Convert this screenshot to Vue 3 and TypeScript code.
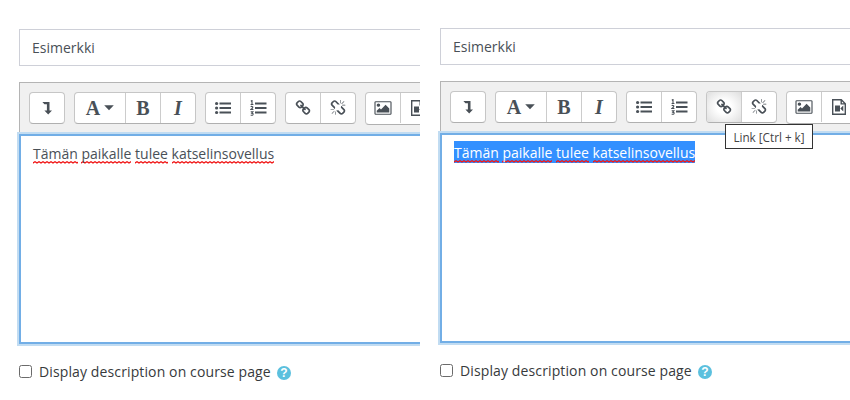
<script setup lang="ts">
interface Panel {
  id: string
  selected: boolean
}

const panels: Panel[] = [
  { id: 'before', selected: false },
  { id: 'after', selected: true },
]
const words: string[] = ['Tämän', 'paikalle', 'tulee', 'katselinsovellus']

const linkPath =
  'M1520 1216q0-40-28-68l-208-208q-28-28-68-28-42 0-72 32 3 3 19 18.5t21.5 21.5 15 19 13 25.5 3.5 27.5q0 40-28 68t-68 28q-15 0-27.5-3.5t-25.5-13-19-15-21.5-21.5-18.5-19q-33 31-33 73 0 40 28 68l206 207q27 27 68 27 40 0 68-26l147-146q28-28 28-67zm-703-705q0-40-28-68l-206-207q-28-28-68-28-39 0-68 27l-147 146q-28 28-28 67 0 40 28 68l208 208q27 27 68 27 42 0 72-31-3-3-19-18.5t-21.5-21.5-15-19-13-25.5-3.5-27.5q0-40 28-68t68-28q15 0 27.5 3.5t25.5 13 19 15 21.5 21.5 18.5 19q33-31 33-73zm895 705q0 120-85 203l-147 146q-83 83-203 83-121 0-204-85l-206-207q-83-83-83-203 0-123 88-209l-88-88q-86 88-208 88-120 0-204-84l-208-208q-84-84-84-204t85-203l147-146q83-83 203-83 121 0 204 85l206 207q83 83 83 203 0 123-88 209l88 88q86-88 208-88 120 0 204 84l208 208q84 84 84 204z'
const unlinkPath =
  'M503 1271l-256 256q-10 9-23 9-12 0-23-9-9-10-9-23t9-23l256-256q10-9 23-9t23 9q9 10 9 23t-9 23zm169 41v320q0 14-9 23t-23 9-23-9-9-23v-320q0-14 9-23t23-9 23 9 9 23zm-224-224q0 14-9 23t-23 9h-320q-14 0-23-9t-9-23 9-23 23-9h320q14 0 23 9t9 23zm1264 128q0 120-85 203l-147 146q-83 83-203 83-121 0-204-85l-334-335q-21-21-42-56l239-18 273 274q28 28 68 28t68-27l147-146q28-28 28-67 0-40-28-68l-274-275 18-239q35 21 56 42l336 336q84 86 84 204zm-617-724l-239 18-273-274q-28-28-68-28-39 0-68 27l-147 146q-28 28-28 67 0 40 28 68l274 274-18 240q-35-21-56-42l-336-336q-84-86-84-204 0-120 85-203l147-146q83-83 203-83 121 0 204 85l334 335q21 21 42 56zm633 84q0 14-9 23t-23 9h-320q-14 0-23-9t-9-23 9-23 23-9h320q14 0 23 9t9 23zm-544-544v320q0 14-9 23t-23 9-23-9-9-23v-320q0-14 9-23t23-9 23 9 9 23zm407 151l-256 256q-11 9-23 9t-23-9q-9-10-9-23t9-23l256-256q10-9 23-9t23 9q9 10 9 23t-9 23z'
const imagePath =
  'M576 576q0 80-56 136t-136 56-136-56-56-136 56-136 136-56 136 56 56 136zm1024 384v448h-1408v-192l320-320 160 160 512-512zm96-704h-1600q-13 0-22.5 9.5t-9.5 22.5v1216q0 13 9.5 22.5t22.5 9.5h1600q13 0 22.5-9.5t9.5-22.5v-1216q0-13-9.5-22.5t-22.5-9.5zm160 32v1216q0 66-47 113t-113 47h-1600q-66 0-113-47t-47-113v-1216q0-66 47-113t113-47h1600q66 0 113 47t47 113z'
</script>

<template>
  <div class="screen">
    <section v-for="p in panels" :key="p.id" class="panel" :class="p.id">
      <div class="name-field"><span>Esimerkki</span></div>

      <div class="editor">
        <div class="toolbar">
          <div class="group">
            <button class="btn" type="button">
              <svg width="16" height="16" viewBox="0 0 16 16">
                <path d="M3.400 2h7.100v8.500h2.500L9.200 14.500 5.400 10.500h2.500V4.300H5.400z" />
              </svg>
            </button>
          </div>
          <div class="group">
            <button class="btn wide" type="button">
              <span class="glyph">A</span>
              <svg class="caret" width="10" height="6" viewBox="0 0 10 6"><path d="M0.200 0.300h9.600L5 5.300z" /></svg>
            </button>
            <button class="btn" type="button"><span class="glyph bold">B</span></button>
            <button class="btn" type="button"><span class="glyph italic">I</span></button>
          </div>
          <div class="group">
            <button class="btn" type="button">
              <svg width="16" height="16" viewBox="0 0 16 16">
                <circle cx="1.600" cy="3.500" r="1.600" /><circle cx="1.600" cy="8" r="1.600" /><circle cx="1.600" cy="12.500" r="1.600" />
                <path d="M4.500 2.500H16v2H4.500zM4.500 7H16v2H4.500zM4.500 11.500H16v2H4.500z" />
              </svg>
            </button>
            <button class="btn" type="button">
              <svg width="17" height="16" viewBox="0 0 17 16">
                <path d="M5 2.500h11.500v2H5zM5 7h11.500v2H5zM5 11.500h11.500v2H5z" />
                <path class="numerals" d="M0.800 1.200L2 .5v4M.6 4.500h2.800M.7 6.800q1-.9 2 0 .6 1-1.800 2.700h2.500M.7 11.700h2.200l-1.200 1.500q2 .2 1.200 1.600-.8.900-2.200.2" />
              </svg>
            </button>
          </div>
          <div class="group">
            <button class="btn" :class="{ hovered: p.selected }" type="button">
              <svg width="16" height="16" viewBox="0 0 1792 1792"><path :d="linkPath" /></svg>
            </button>
            <button class="btn" type="button">
              <svg width="16" height="16" viewBox="0 0 1792 1792"><path :d="unlinkPath" /></svg>
            </button>
          </div>
          <div class="group media">
            <button class="btn" type="button">
              <svg width="18" height="16" viewBox="-64 0 1920 1792"><path :d="imagePath" /></svg>
            </button>
            <button class="btn" type="button">
              <svg width="14" height="16" viewBox="0 0 14 16">
                <path class="outline" d="M.7.700h8.600l4 4v10.600H.7zM9.200.7v4.200h4.100" />
                <path d="M3 6.600h5v5.800H3zM8.300 9.500l3-2.900v5.800z" />
              </svg>
            </button>
            <button class="btn" type="button"></button>
          </div>
        </div>
        <div class="content">
          <p class="line" :class="{ selected: p.selected }">
            <template v-for="(w, i) in words" :key="w"><span class="misspelt">{{ w }}</span>{{ i < words.length - 1 ? ' ' : '' }}</template>
          </p>
        </div>
        <div v-if="p.selected" class="tooltip">Link [Ctrl + k]</div>
      </div>

      <div class="option">
        <span class="checkbox"></span>
        <span class="label">Display description on course page</span>
        <span class="help">?</span>
      </div>
    </section>
  </div>
</template>

<style>
body {
  margin: 0;
  background: #fff;
}
</style>

<style scoped>
.screen {
  display: grid;
  grid-template-columns: 420px 429px;
  column-gap: 1px;
  width: 850px;
  height: 400px;
  overflow: hidden;
  font-family: "Open Sans", "Noto Sans", sans-serif;
  font-size: 14px;
  color: #495057;
}
.panel {
  box-sizing: border-box;
  height: 400px;
  padding: 29px 0 0 19px;
  overflow: hidden;
}
.after {
  padding-top: 28px;
  padding-left: 22px;
  margin-left: -3px;
}
.name-field {
  box-sizing: border-box;
  width: 460px;
  height: 37px;
  padding-left: 12px;
  border: 1px solid #ced0d8;
  line-height: 35px;
}
.editor {
  position: relative;
  width: 460px;
  margin-top: 16px;
}
.toolbar {
  box-sizing: border-box;
  display: flex;
  gap: 9px;
  height: 52px;
  padding: 9px;
  border: 1px solid #b4b4b4;
  border-bottom: 0;
  background: #f0f0f0;
}
.group {
  box-sizing: border-box;
  display: flex;
  flex: none;
  height: 32px;
  border: 1px solid #c6c6c6;
  border-bottom-color: #b0b0b0;
  border-radius: 4px;
  background: #fff;
  overflow: hidden;
}
.media {
  height: 33px;
}
.btn {
  box-sizing: border-box;
  display: flex;
  align-items: center;
  justify-content: center;
  width: 34px;
  height: 30px;
  padding: 0;
  border: 0;
  background: transparent;
  color: #495057;
}
.btn + .btn {
  width: 35px;
  border-left: 1px solid #ccc;
}
.wide {
  width: 50px;
  gap: 4px;
}
.hovered {
  background: radial-gradient(ellipse at center, #fff 30%, #dedede 100%);
}
svg {
  display: block;
  flex: none;
  fill: #495057;
}
.numerals,
.outline {
  fill: none;
  stroke: #495057;
  stroke-width: 1.1;
}
.outline {
  stroke-width: 1.4;
}
.glyph {
  font: bold 20px/30px "Liberation Serif", serif;
}
.italic {
  font-style: italic;
}
.content {
  box-sizing: border-box;
  height: 210px;
  padding: 6px 12px;
  border: 2px solid #72aee6;
  background: #fff;
  box-shadow: 0 0 0 2px #c1dcf2;
}
.line {
  width: max-content;
  height: 22px;
  margin: 0;
  line-height: 24px;
  white-space: nowrap;
}
.misspelt {
  display: inline-block;
  height: 24px;
  background: url("data:image/svg+xml,%3Csvg xmlns='http://www.w3.org/2000/svg' width='4' height='3'%3E%3Cpath d='M-1 .5L0 2 2 .7 4 2 5 .5' fill='none' stroke='%23f01818' stroke-width='1.3'/%3E%3C/svg%3E") repeat-x 0 19px;
}
.selected {
  background: #3390ff;
  color: #fff;
}
.tooltip {
  position: absolute;
  top: 43px;
  left: 285px;
  box-sizing: border-box;
  width: 88px;
  height: 25px;
  border: 1px solid #333;
  background: #fff;
  color: #444;
  font-size: 11.7px;
  line-height: 24px;
  text-align: center;
  white-space: nowrap;
}
.option {
  display: flex;
  align-items: center;
  height: 24px;
  margin-top: 15px;
  color: #373a3c;
}
.checkbox {
  box-sizing: border-box;
  width: 13px;
  height: 13px;
  margin-right: 7px;
  border: 1px solid #6b6b6b;
  border-radius: 2.5px;
}
.label {
  white-space: nowrap;
  letter-spacing: 0.12px;
}
.help {
  width: 14px;
  height: 14px;
  margin: 3px 0 0 6px;
  border-radius: 50%;
  background: #5bc0de;
  color: #fff;
  font: bold 12px/14px "Liberation Sans", sans-serif;
  text-align: center;
}
</style>
